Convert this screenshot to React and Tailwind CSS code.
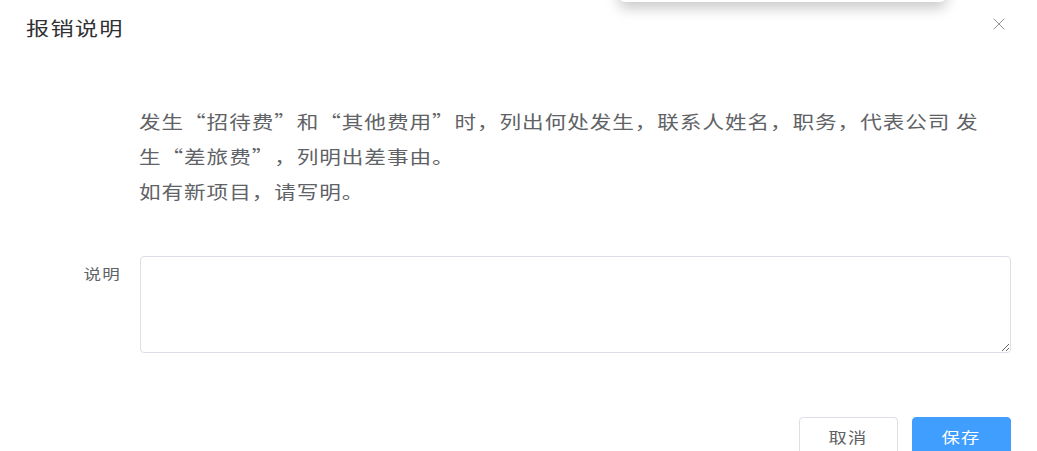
import { X } from "lucide-react";

const font = { fontFamily: '"Noto Sans CJK SC", "Liberation Sans", sans-serif' };

export default function App() {
  return (
    <div className="relative w-[1037px] h-[451px] overflow-hidden bg-white [text-spacing-trim:space-all]" style={font}>
      {/* dropdown bottom edge hanging from above */}
      <div className="absolute left-[619px] top-[-40px] w-[327px] h-[42px] bg-white rounded-b-[6px] shadow-[0_6px_14px_rgba(0,0,0,0.22)]" />

      {/* header */}
      <div className="flex items-start justify-between pl-[26px] pr-[28px] pt-[15px]">
        <h2 className="origin-left scale-x-[1.22] text-[19px] leading-[26px] tracking-[1px] text-[#303133] font-normal">报销说明</h2>
        <button className="-mt-[1px] text-[#909399]">
          <X size={20} strokeWidth={1.2} />
        </button>
      </div>

      {/* body */}
      <div className="pl-[139px] pt-[63px] text-[18px] leading-[35px] tracking-[0.78px] text-[#606266]">
        <p className="whitespace-nowrap origin-left scale-x-[1.2]">发生“招待费”和“其他费用”时，列出何处发生，联系人姓名，职务，代表公司 发</p>
        <p className="whitespace-nowrap origin-left scale-x-[1.2]">生“差旅费”，列明出差事由。</p>
        <p className="whitespace-nowrap origin-left scale-x-[1.2]">如有新项目，请写明。</p>
      </div>

      {/* form */}
      <div className="flex mt-[47px] pr-[26px]">
        <label className="w-[140px] shrink-0 pr-[19px] pt-[7px] text-right text-[14px] leading-[20px] text-[#606266]">
          <span className="inline-block origin-right scale-x-[1.25] tracking-[1px]">说明</span>
        </label>
        <textarea
          className="flex-1 h-[97px] rounded-[4px] border border-[#dcdfe6] px-[15px] py-[5px] text-[14px] text-[#606266] outline-none resize-y"
          rows={4}
        />
      </div>

      {/* footer */}
      <div className="flex justify-end gap-[14px] pr-[26px] mt-[64px]">
        <button className="w-[99px] h-[40px] rounded-[4px] border border-[#dcdfe6] bg-white text-[15px] text-[#606266]">
          <span className="inline-block scale-x-[1.22] tracking-[1px]">取消</span>
        </button>
        <button className="w-[99px] h-[40px] rounded-[4px] border border-[#409eff] bg-[#409eff] text-[15px] text-white">
          <span className="inline-block scale-x-[1.22] tracking-[1px]">保存</span>
        </button>
      </div>
    </div>
  );
}
